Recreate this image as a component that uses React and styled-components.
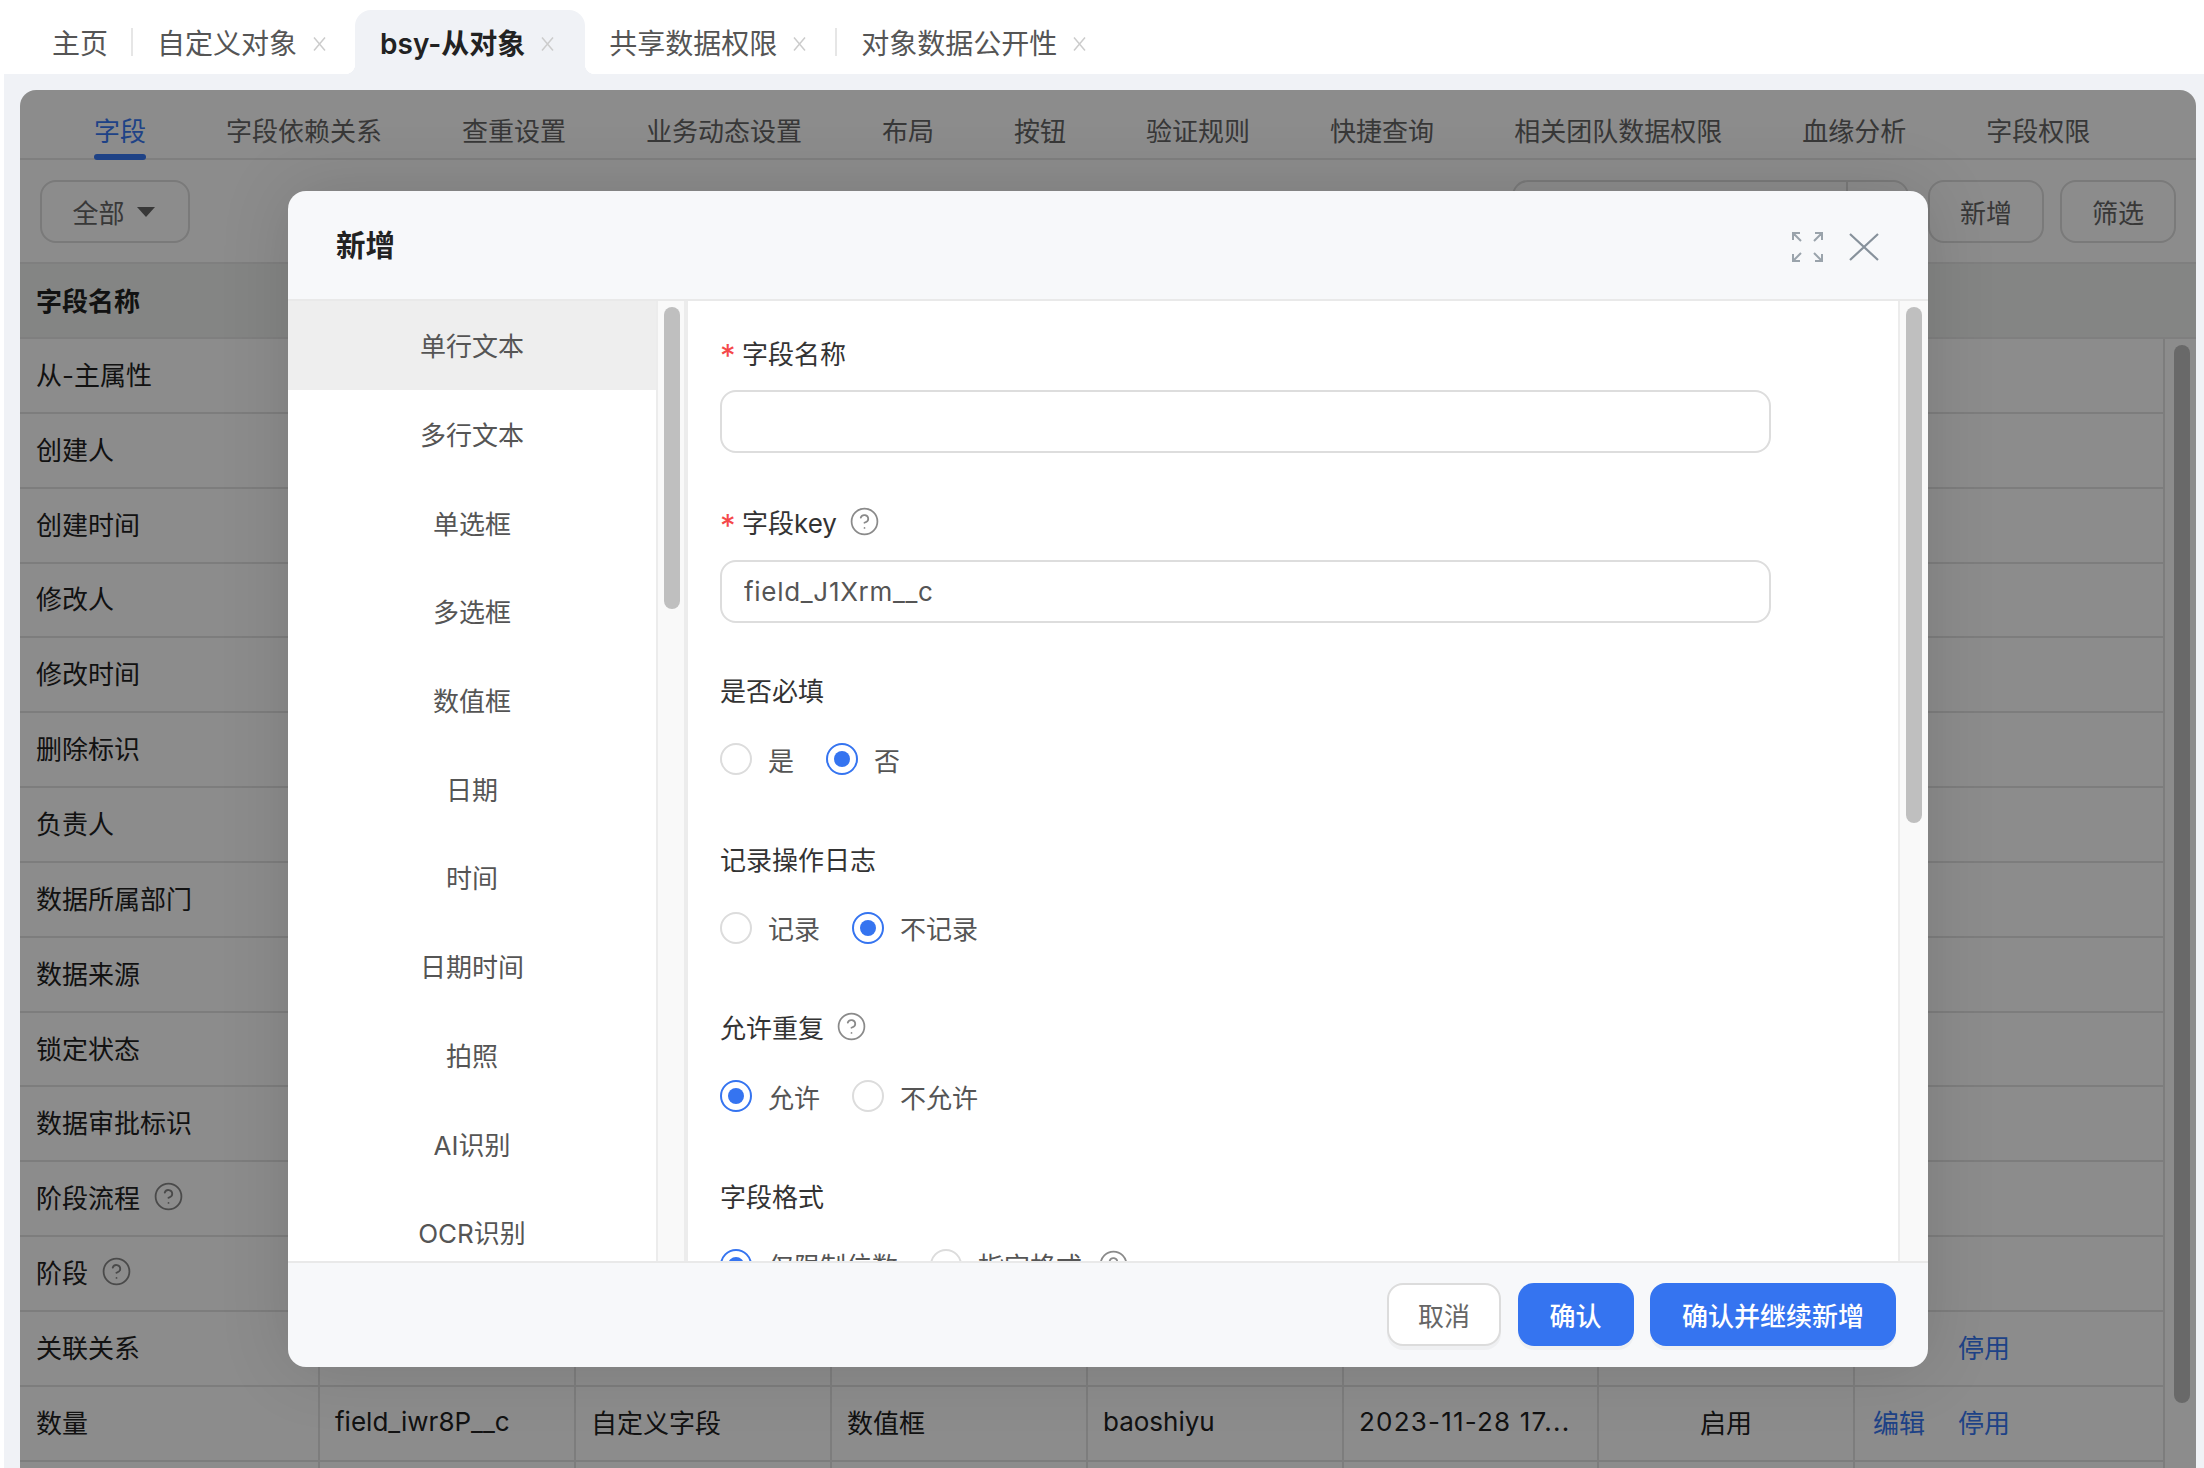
import React from 'react';
import styled, { createGlobalStyle } from 'styled-components';
import { CircleHelp } from 'lucide-react';

const Global = createGlobalStyle`
  html, body { margin: 0; padding: 0; background: #fff; }
  body { font-family: Inter, "Noto Sans CJK SC", sans-serif; font-size: 26px; color: #333; }
  * { box-sizing: border-box; }
`;

const Page = styled.div`
  width: 2204px; height: 1468px; overflow: hidden; background: #fff;
  display: flex; flex-direction: column;
`;
const TabBar = styled.div`
  height: 74px; flex: none; padding: 10px 0 0 28px; display: flex; align-items: stretch;
  background: #fff;
`;
const Tab = styled.div`
  position: relative; display: flex; align-items: center; height: 64px;
  padding: 0 ${p => (p.$home ? '23px' : p.$active ? '30px' : '28px')} 0 ${p => (p.$active ? 25 : 24)}px;
  font-size: 28px; color: ${p => (p.$active ? '#222' : '#555')};
  font-weight: ${p => (p.$active ? 600 : 400)};
  white-space: nowrap;
  ${p => p.$active && `
    background: #f0f2f6; border-radius: 16px 16px 0 0;
    &::before, &::after { content: ''; position: absolute; bottom: 0; width: 10px; height: 10px; }
    &::before { left: -10px; background: radial-gradient(circle at 0 0, #fff 10px, #f0f2f6 10.5px); }
    &::after { right: -10px; background: radial-gradient(circle at 100% 0, #fff 10px, #f0f2f6 10.5px); }
  `}
`;
const TabClose = styled.svg`
  width: 15px; height: 16px; margin-left: 15px; margin-top: 4px; flex: none;
`;
const TabDivider = styled.span`
  width: 2px; height: 28px; margin-top: 18px; background: #e6e6e6; flex: none;
`;
const Workspace = styled.div`
  flex: 1; min-height: 0; margin-left: 4px; padding: 16px 8px 0 16px;
  background: #f0f2f6; display: flex;
`;
const Panel = styled.div`
  position: relative; flex: 1; overflow: hidden; background: #fff;
  border-radius: 16px 16px 0 0;
`;
const SubTabs = styled.div`
  height: 70px; padding-left: 74px; display: flex; gap: 80px; align-items: center;
  border-bottom: 2px solid #e8e8e8;
`;
const SubTab = styled.div`
  position: relative; height: 68px; display: flex; align-items: center;
  white-space: nowrap; color: ${p => (p.$active ? '#3878f5' : '#666')};
  padding-top: 10px;
  ${p => p.$active && `
    &::after { content: ''; position: absolute; left: 0; right: 0; bottom: -2px; height: 6px;
      border-radius: 3px; background: #3878f5; }
  `}
`;
const Toolbar = styled.div`
  height: 104px; padding: 20px 20px 0 20px; display: flex; justify-content: space-between;
  align-items: flex-start; border-bottom: 2px solid #e8e8e8;
`;
const Tools = styled.div`
  display: flex; gap: 16px;
`;
const ToolButton = styled.div`
  width: ${p => p.$w}px; height: 63px; border: 2px solid #dedede; border-radius: 16px;
  padding-right: ${p => p.$shift || 0}px;
  display: flex; align-items: center; justify-content: center; gap: 12px; color: #666;
`;
const Caret = styled.svg`
  width: 18px; height: 10px;
`;
const Search = styled.div`
  width: 397px; height: 63px; border: 2px solid #dedede; border-radius: 16px;
  display: flex; justify-content: flex-end; margin-right: 3px;
`;
const SearchAddon = styled.div`
  width: 61px; border-left: 2px solid #dedede;
`;
const HeadRow = styled.div`
  height: 75px; background: #f0f2f1; border-bottom: 2px solid #e8e8e8;
  display: flex; align-items: center; padding: 0 0 2px 16px;
  font-weight: 700; color: #222;
`;
const TableBody = styled.div`
  display: flex; align-items: flex-start;
`;
const Rows = styled.div`
  width: 2145px; flex: none;
`;
const Row = styled.div`
  height: 74.85px; display: grid;
  grid-template-columns: 298px 256px 256px 256px 256px 255px 256px 312px;
  border-bottom: 2px solid #e4e4e4;
`;
const Cell = styled.div`
  display: flex; align-items: center; padding: 0 15px 4px ${p => (p.$first ? 16 : 15)}px;
  white-space: nowrap; color: #222; gap: 13px;
  border-left: ${p => (p.$first ? 'none' : '2px solid #e4e4e4')};
  border-right: ${p => (p.$last ? '2px solid #e4e4e4' : 'none')};
  justify-content: ${p => (p.$center ? 'center' : 'flex-start')};
  letter-spacing: ${p => (p.$wide ? '1.2px' : 'normal')};
`;
const ActionCell = styled(Cell)`
  padding-left: 18px; gap: 33px;
`;
const ActionLink = styled.span`
  color: #3878f5; visibility: ${p => (p.$hidden ? 'hidden' : 'visible')};
`;
const TableHelp = styled(CircleHelp)`
  width: 31px; height: 31px; color: #888; stroke-width: 1.4;
`;
const Gutter = styled.div`
  flex: 1; padding: 6px 0 0 9px;
`;
const GutterThumb = styled.div`
  width: 16px; height: 1058px; border-radius: 8px; background: #c0c0c0;
`;
const Mask = styled.div`
  position: absolute; inset: 0; background: rgba(0,0,0,.45); display: flex;
  padding: 101px 0 0 268px; align-items: flex-start;
`;
const Modal = styled.div`
  width: 1640px; height: 1176px; background: #f7f8fa; border-radius: 18px; overflow: hidden;
  display: flex; flex-direction: column; box-shadow: 0 0 70px rgba(0,0,0,.13);
`;
const ModalHead = styled.div`
  height: 110px; flex: none; border-bottom: 2px solid #e9e9e9; padding: 0 49px 0 48px;
  display: flex; align-items: center; gap: 26px;
`;
const ModalTitle = styled.div`
  flex: 1; font-size: 29.5px; font-weight: 600; color: #222; margin-top: -4px;
`;
const HeadIcon = styled.svg`
  flex: none; margin-top: 4px;
`;
const ModalBody = styled.div`
  flex: 1; min-height: 0; display: flex; background: #fff;
`;
const TypeList = styled.div`
  width: 368px; flex: none; overflow: hidden;
`;
const TypeItem = styled.div`
  height: 88.7px; display: flex; align-items: center; justify-content: center; padding-bottom: 1px;
  color: #555; background: ${p => (p.$active ? '#eeeeee' : 'transparent')};
`;
const ScrollTrack = styled.div`
  flex: none; width: ${p => p.$w}px; background: #f9f9f9;
  border-left: 2px solid #ececec;
  border-right: ${p => p.$edge ? '4px solid #ececec' : 'none'};
  padding: 6px 0 0 ${p => p.$pad}px;
`;
const ScrollThumb = styled.div`
  width: 16px; height: ${p => p.$h}px; border-radius: 8px; background: #bfbfbf;
`;
const Form = styled.div`
  flex: 1; min-width: 0; overflow: hidden; padding: 32px 0 0 32px;
`;
const Group = styled.div`
  height: 168.4px;
  &:first-child { height: 169.5px; }
`;
const Label = styled.div`
  height: 40px; display: flex; align-items: center; color: #333; white-space: nowrap;
  padding-bottom: 2px;
`;
const Star = styled.span`
  width: 22px; flex: none; color: #f5484a; font-size: 31px; line-height: 1; padding-top: 7px;
`;
const FormHelp = styled(CircleHelp)`
  width: 31px; height: 31px; color: #8a8a8a; stroke-width: 1.35;
  margin-left: ${p => p.$tight ? 0 : 12}px;
`;
const TextInput = styled.input`
  display: block; width: 1051px; height: 63px; margin-top: 17px; padding: 0 22px;
  border: 2px solid #dddddd; border-radius: 16px; outline: none; background: #fff;
  font: inherit; color: #555; letter-spacing: 0.7px;
`;
const RadioRow = styled.div`
  display: flex; gap: 32px; margin-top: 30px; align-items: center;
`;
const RadioItem = styled.label`
  display: flex; align-items: center; gap: 16px; color: #555; white-space: nowrap;
`;
const RadioDot = styled.span`
  width: 32px; height: 32px; border-radius: 50%; flex: none;
  display: flex; align-items: center; justify-content: center;
  border: ${p => (p.$on ? '2.5px solid #3574f0' : '2px solid #dcdcdc')};
  &::after { content: ''; width: 16px; height: 16px; border-radius: 50%;
    background: ${p => (p.$on ? '#3574f0' : 'transparent')}; }
`;
const ModalFoot = styled.div`
  height: 106px; flex: none; border-top: 2px solid #e9e9e9; padding: 0 32px 2px 0;
  display: flex; align-items: center; justify-content: flex-end; gap: 16.5px;
`;
const FootButton = styled.div`
  width: ${p => p.$w}px; height: 63px; border-radius: 16px;
  display: flex; align-items: center; justify-content: center;
  box-shadow: 0 4px 0 rgba(0,0,0,.03);
  background: ${p => (p.$primary ? '#3574f0' : '#fff')};
  color: ${p => (p.$primary ? '#fff' : '#666')};
  border: ${p => (p.$primary ? 'none' : '2px solid #dcdcdc')};
  font-weight: ${p => (p.$primary ? 500 : 400)};
`;

const X = () => (
  <TabClose viewBox="0 0 15 16" fill="none" stroke="#cccccc" strokeWidth="1.5">
    <path d="M2 1.5 13 14.5M13 1.5 2 14.5" />
  </TabClose>
);

const Radio = ({ on, children }) => (
  <RadioItem><RadioDot $on={on} />{children}</RadioItem>
);

const subTabs = ['字段', '字段依赖关系', '查重设置', '业务动态设置', '布局', '按钮', '验证规则', '快捷查询', '相关团队数据权限', '血缘分析', '字段权限'];
const types = ['单行文本', '多行文本', '单选框', '多选框', '数值框', '日期', '时间', '日期时间', '拍照', 'AI识别', 'OCR识别'];
const rows = [
  { name: '从-主属性' }, { name: '创建人' }, { name: '创建时间' }, { name: '修改人' }, { name: '修改时间' },
  { name: '删除标识' }, { name: '负责人' }, { name: '数据所属部门' }, { name: '数据来源' }, { name: '锁定状态' },
  { name: '数据审批标识' }, { name: '阶段流程', help: true }, { name: '阶段', help: true },
  { name: '关联关系', stop: true },
  { name: '数量', cells: ['field_iwr8P__c', '自定义字段', '数值框', 'baoshiyu', '2023-11-28 17...'], state: '启用', edit: true, stop: true },
  { name: '' },
];

export default function App() {
  return (
    <Page>
      <Global />
      <TabBar>
        <Tab $home>主页</Tab>
        <TabDivider />
        <Tab>自定义对象<X /></Tab>
        <Tab $active>bsy-从对象<X /></Tab>
        <Tab>共享数据权限<X /></Tab>
        <TabDivider />
        <Tab>对象数据公开性<X /></Tab>
      </TabBar>
      <Workspace>
        <Panel>
          <SubTabs>
            {subTabs.map((t, i) => <SubTab key={t} $active={i === 0}>{t}</SubTab>)}
          </SubTabs>
          <Toolbar>
            <ToolButton $w={150} $shift={3}>全部
              <Caret viewBox="0 0 18 10"><path d="M0 0h18L9 10z" fill="#666" /></Caret>
            </ToolButton>
            <Tools>
              <Search><SearchAddon /></Search>
              <ToolButton $w={116}>新增</ToolButton>
              <ToolButton $w={116}>筛选</ToolButton>
            </Tools>
          </Toolbar>
          <HeadRow>字段名称</HeadRow>
          <TableBody>
            <Rows>
              {rows.map((r, i) => (
                <Row key={i}>
                  <Cell $first>{r.name}{r.help && <TableHelp />}</Cell>
                  {[0, 1, 2, 3, 4].map(c => <Cell key={c} $wide={c === 4}>{r.cells ? r.cells[c] : ''}</Cell>)}
                  <Cell $center>{r.state}</Cell>
                  <ActionCell $last>
                    {r.stop && <ActionLink $hidden={!r.edit}>编辑</ActionLink>}
                    {r.stop && <ActionLink>停用</ActionLink>}
                  </ActionCell>
                </Row>
              ))}
            </Rows>
            <Gutter><GutterThumb /></Gutter>
          </TableBody>
          <Mask>
            <Modal>
              <ModalHead>
                <ModalTitle>新增</ModalTitle>
                <HeadIcon width="31" height="30" viewBox="0 0 31 30" fill="none" stroke="#9aa3ab" strokeWidth="2">
                  <path d="M1 8V1h7M1 1l8 8M30 8V1h-7M30 1l-8 8M1 22v7h7M1 29l8-8M30 22v7h-7M30 29l-8-8" />
                </HeadIcon>
                <HeadIcon width="30" height="28" viewBox="0 0 30 28" fill="none" stroke="#87919b" strokeWidth="2.2">
                  <path d="M1 1l28 26M29 1 1 27" />
                </HeadIcon>
              </ModalHead>
              <ModalBody>
                <TypeList>
                  {types.map((t, i) => <TypeItem key={t} $active={i === 0}>{t}</TypeItem>)}
                </TypeList>
                <ScrollTrack $w={32} $pad={6} $edge><ScrollThumb $h={302} /></ScrollTrack>
                <Form>
                  <Group>
                    <Label><Star>*</Star>字段名称</Label>
                    <TextInput readOnly value="" />
                  </Group>
                  <Group>
                    <Label><Star>*</Star>字段key<FormHelp /></Label>
                    <TextInput readOnly value="field_J1Xrm__c" />
                  </Group>
                  <Group>
                    <Label>是否必填</Label>
                    <RadioRow><Radio>是</Radio><Radio on>否</Radio></RadioRow>
                  </Group>
                  <Group>
                    <Label>记录操作日志</Label>
                    <RadioRow><Radio>记录</Radio><Radio on>不记录</Radio></RadioRow>
                  </Group>
                  <Group>
                    <Label>允许重复<FormHelp /></Label>
                    <RadioRow><Radio on>允许</Radio><Radio>不允许</Radio></RadioRow>
                  </Group>
                  <Group>
                    <Label>字段格式</Label>
                    <RadioRow>
                      <Radio on>仅限制位数</Radio>
                      <Radio>指定格式<FormHelp $tight /></Radio>
                    </RadioRow>
                  </Group>
                </Form>
                <ScrollTrack $w={30} $pad={6}><ScrollThumb $h={516} /></ScrollTrack>
              </ModalBody>
              <ModalFoot>
                <FootButton $w={114}>取消</FootButton>
                <FootButton $w={116} $primary>确认</FootButton>
                <FootButton $w={246} $primary>确认并继续新增</FootButton>
              </ModalFoot>
            </Modal>
          </Mask>
        </Panel>
      </Workspace>
    </Page>
  );
}
